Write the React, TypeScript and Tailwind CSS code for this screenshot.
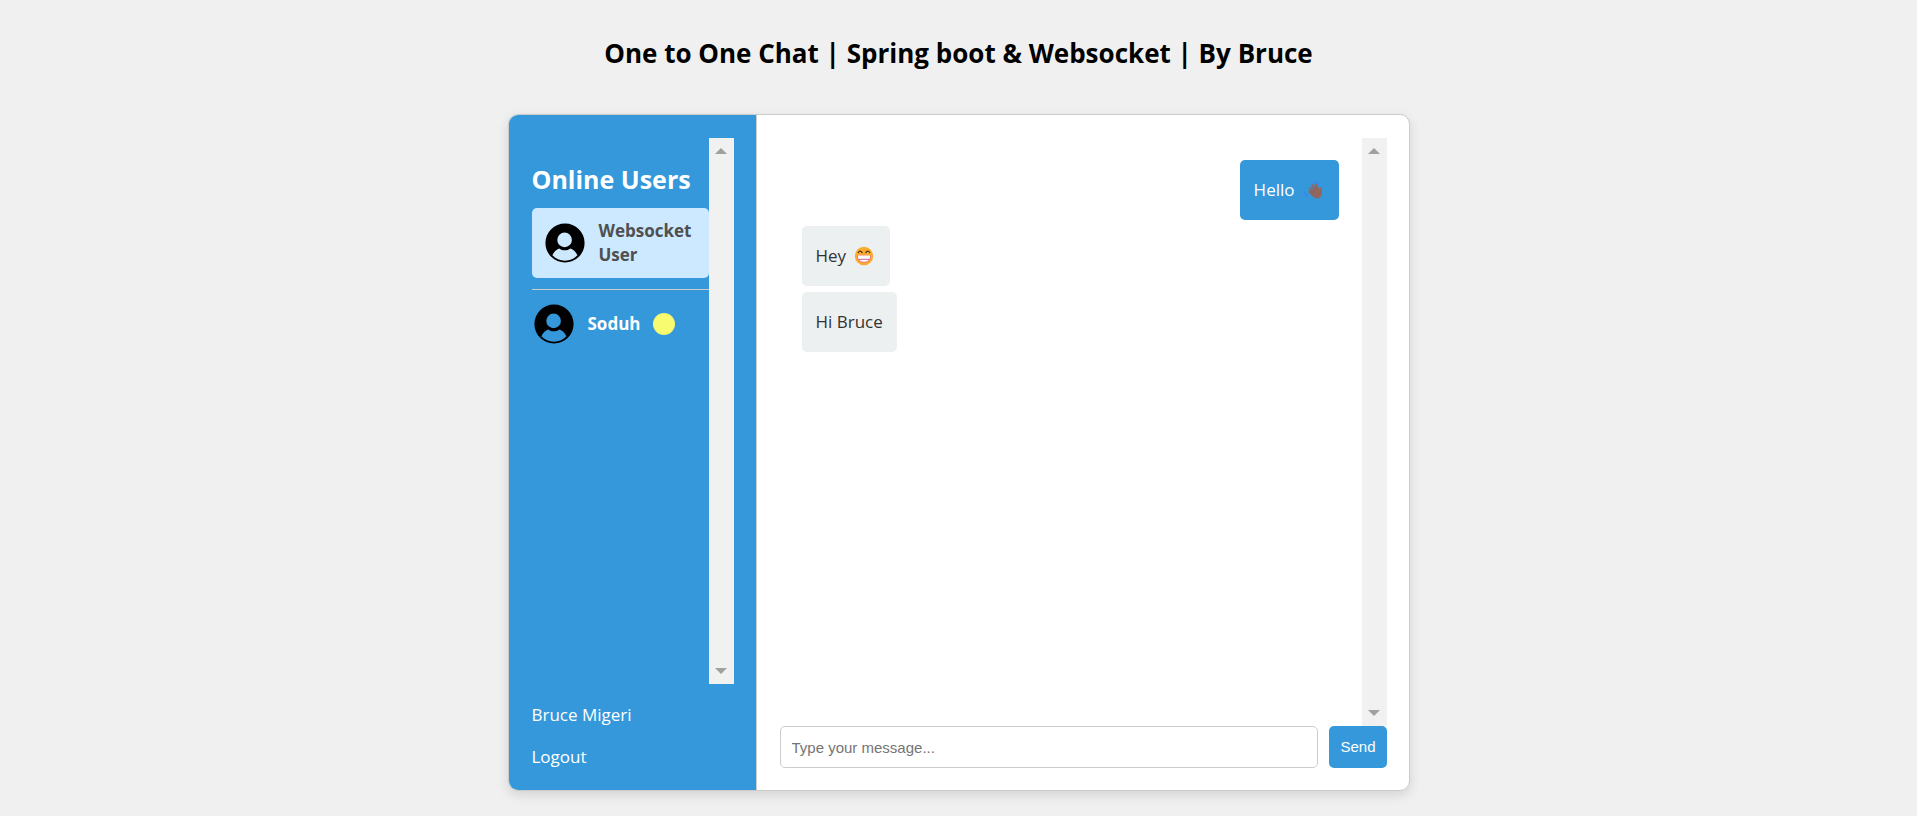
import { useState } from "react";

function Avatar() {
  return (
    <svg viewBox="0 0 40 40" className="size-10 shrink-0" aria-hidden="true">
      <path
        fillRule="evenodd"
        fill="#000"
        d="M20 .4a19.6 19.6 0 1 1 0 39.2a19.6 19.6 0 0 1 0-39.2ZM19.6 9.6a7.3 7.3 0 1 0 0 14.6a7.3 7.3 0 0 0 0-14.6ZM14.2 25.4C11.4 26.4 8.800 29 7.400 32.200C10.500 35.600 15 37.700 20 37.700S29.500 35.600 32.400 32.200C31 29 28.400 26.400 25.400 25.400C23.800 26.700 21.800 27.300 19.800 27.300S15.800 26.700 14.200 25.400Z"
      />
    </svg>
  );
}

function WavingHand() {
  return (
    <svg viewBox="0 0 20 20" className="size-5 shrink-0" role="img" aria-label="waving hand">
      <g fill="none" stroke="#3b88f0" strokeWidth="2" strokeLinecap="round">
        <path d="M12 2q2.800 0 3.600 3" />
        <path d="M1.400 12.400q.4 2.600 3.400 3.200" />
      </g>
      <g stroke="#93665d" strokeLinecap="round" fill="none">
        <path strokeWidth="2.200" d="M6.300 11.500L10 15M6.800 8.200L12 13M9.200 5.300L14 11M12.700 4.700L15.500 10" />
        <path strokeWidth="2.400" d="M17.700 8.400L17.500 13" />
      </g>
      <path fill="#93665d" d="M7.500 11.500L12.500 7.500L18.800 10.200V14.500Q17.500 18.800 13.500 18.500Q10 17.600 7.500 14Z" />
      <path stroke="#74504a" strokeWidth=".4" strokeLinecap="round" fill="none" d="M8.200 10.800l2 2M9.200 8l2.400 2.700M12 7l1.700 2.200" />
    </svg>
  );
}

function BeamingFace() {
  return (
    <svg viewBox="0 0 20 20" className="size-5 shrink-0" role="img" aria-label="beaming face">
      <circle cx="10" cy="10" r="9.200" fill="#fcab2d" />
      <g fill="none" stroke="#4a3528" strokeWidth="1.300" strokeLinecap="round">
        <path d="M4.300 6.500q1.800-2.600 3.800 0" />
        <path d="M11.900 6.500q2-2.600 3.800 0" />
      </g>
      <path fill="#fff" stroke="#d0609a" strokeWidth=".9" d="M3.700 9.900H16.300Q16.200 16.100 10 16.100T3.700 9.900Z" />
      <path fill="#fff" d="M3.900 9.600H16.100Q16 12 15.200 13H4.800Q4 12 3.900 9.600Z" />
      <path stroke="#d0609a" strokeWidth="1" d="M4.400 13.300H15.600" />
      <path fill="#fff" d="M6 14H14Q12.800 15.600 10 15.600T6 14Z" />
    </svg>
  );
}

function ScrollTrack() {
  return (
    <div className="flex w-[25px] shrink-0 flex-col items-center justify-between bg-[#f1f1f1] py-[10px]" aria-hidden="true">
      <svg viewBox="0 0 12 6" className="h-[6px] w-3">
        <path fill="#a0a0a0" d="M6 0L12 6H0Z" />
      </svg>
      <svg viewBox="0 0 12 6" className="h-[6px] w-3">
        <path fill="#a0a0a0" d="M6 6L12 0H0Z" />
      </svg>
    </div>
  );
}

function Sidebar() {
  return (
    <aside className="flex w-[248px] shrink-0 flex-col border-r border-[#ccc] bg-[#3498db] px-[23px] pt-[23px] pb-[14px] text-white">
      <div className="-mr-px flex h-[546px]">
        <div className="min-w-0 flex-1 pt-6">
          <h2 className="text-[25px] leading-[34px] font-bold whitespace-nowrap">Online Users</h2>
          <ul className="pt-3">
            <li>
              <button className="flex h-[70px] w-full items-center gap-[14px] rounded-[5px] bg-[#cce9ff] px-[13px] text-left text-[17px] leading-6 font-bold text-[#4f4f4f]">
                <Avatar />
                <span>Websocket User</span>
              </button>
            </li>
            <li className="mt-[11px] border-t border-[#ccc] pt-[14px]">
              <button className="flex w-full items-center px-[2px] text-left text-[17px] leading-6 font-bold">
                <Avatar />
                <span className="pl-[14px]">Soduh</span>
                <span className="ml-3 size-[22px] rounded-full bg-[#f8fa6f]" />
              </button>
            </li>
          </ul>
        </div>
        <ScrollTrack />
      </div>
      <div className="flex flex-col items-start gap-[18px] pt-[19px] text-[17px] leading-6">
        <p>Bruce Migeri</p>
        <a href="#logout">Logout</a>
      </div>
    </aside>
  );
}

function Conversation() {
  const [text, setText] = useState("");
  return (
    <main className="flex min-w-0 flex-1 flex-col py-[22px] pr-[22px] pl-[23px]">
      <div className="mt-px flex flex-1">
        <div className="flex min-w-0 flex-1 flex-col items-start gap-[6px] pt-[22px] pr-[23px] pl-[22px] text-[17px] leading-6 text-[#333]">
          <div className="flex h-[60px] items-center gap-2 self-end rounded-[5px] bg-[#3498db] pr-4 pl-[14px] text-white">
            Hello <WavingHand />
          </div>
          <div className="flex h-[60px] items-center gap-2 rounded-[5px] bg-[#ecf0f1] pr-4 pl-[14px]">
            Hey <BeamingFace />
          </div>
          <div className="flex h-[60px] items-center rounded-[5px] bg-[#ecf0f1] px-[14px]">Hi Bruce</div>
        </div>
        <ScrollTrack />
      </div>
      <form className="flex gap-[11px] font-['Liberation_Sans',Arial,sans-serif] text-[15px]" onSubmit={(e) => e.preventDefault()}>
        <input
          type="text"
          aria-label="Message"
          placeholder="Type your message..."
          value={text}
          onChange={(e) => setText(e.target.value)}
          className="h-[42px] min-w-0 flex-1 rounded-[5px] border border-[#ccc] bg-white px-[11px] outline-none placeholder:text-[#757575]"
        />
        <button type="submit" className="h-[42px] rounded-[5px] bg-[#3498db] px-[11px] text-white">
          Send
        </button>
      </form>
    </main>
  );
}

export default function App() {
  return (
    <div className="flex min-h-screen flex-col items-center bg-[#f0f0f0] font-['Open_Sans','Noto_Sans',sans-serif]">
      <h1 className="pt-[34px] text-[26px] leading-[38px] font-bold text-black">
        One to One Chat | Spring boot &amp; Websocket | By Bruce
      </h1>
      <div className="mt-[42px] mb-6 flex min-h-[677px] w-full max-w-[902px] overflow-hidden rounded-[10px] border border-[#ccc] bg-white shadow-[0_4px_12px_rgba(0,0,0,0.12)]">
        <Sidebar />
        <Conversation />
      </div>
    </div>
  );
}
